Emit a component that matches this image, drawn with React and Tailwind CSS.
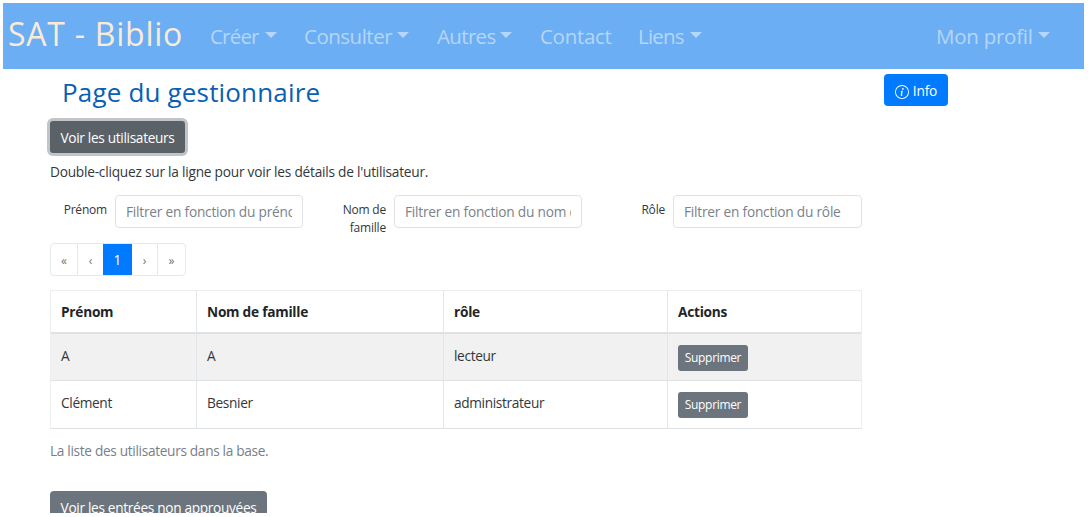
import React from "react";

function Caret() {
  return (
    <span className="mb-[3px] ml-auto inline-block h-0 w-0 border-x-[6px] border-t-[6px] border-x-transparent border-t-current" />
  );
}

function NavItem({ label, caret = true, className = "" }) {
  return (
    <a className={`flex items-center whitespace-nowrap text-[20.5px] leading-[32px] text-[#b5d6f9] ${className}`}>
      {label}
      {caret && <Caret />}
    </a>
  );
}

function Filter({ label, placeholder, className, inputClass }) {
  return (
    <div className={`flex ${className}`}>
      <label className="w-[57px] pt-[6px] text-right text-[12px] leading-[18px] tracking-[-0.2px]">{label}</label>
      <input
        className={`ml-[8px] h-[33px] rounded-[4px] border border-[#dee2e6] bg-white px-[10px] text-[13.7px] tracking-[-0.22px] outline-none placeholder:text-[#7a828a] placeholder:opacity-100 ${inputClass}`}
        placeholder={placeholder}
      />
    </div>
  );
}

function DeleteButton() {
  return (
    <button className="mt-[11px] block h-[26px] w-[70px] whitespace-nowrap rounded-[3px] bg-[#6c757d] text-[12px] leading-[26px] tracking-[-0.33px] text-white">
      Supprimer
    </button>
  );
}

function Row({ cells, className }) {
  return (
    <div className={`grid grid-cols-[146px_247px_224px_1fr] divide-x divide-[#e3e6ea] ${className}`}>
      {cells.map((cell, i) => (
        <div key={i} className="pl-[10px]">
          {cell}
        </div>
      ))}
    </div>
  );
}

export default function App() {
  return (
    <div className="h-[517px] w-[1089px] overflow-hidden bg-white p-[3px] pb-[4px] font-['Open_Sans','Noto_Sans',sans-serif] text-[13.7px] text-[#32373c]">
      <div className="h-[510px] overflow-hidden">
        <nav className="flex h-[66px] w-[1081px] items-center bg-[#6caef3] pl-[5px]">
          <span className="mb-[5px] w-[175px] whitespace-nowrap text-[32px] leading-[48px] tracking-[0.75px] text-[#faebd7]">SAT - Biblio</span>
          <NavItem label="Créer" className="ml-[27px] w-[67px] tracking-[-0.8px]" />
          <NavItem label="Consulter" className="ml-[27px] w-[105px] tracking-[-0.5px]" />
          <NavItem label="Autres" className="ml-[28px] w-[75px] tracking-[-0.65px]" />
          <NavItem label="Contact" caret={false} className="ml-[28px] w-[71px] tracking-[-0.3px]" />
          <NavItem label="Liens" className="ml-[27px] w-[64px] tracking-[-0.8px]" />
          <NavItem label="Mon profil" className="ml-auto mr-[34px] w-[114px] tracking-[-0.25px]" />
        </nav>

        <main className="flex">
          <section className="ml-[47px] w-[812px]">
            <h1 className="ml-[12px] mt-[3px] whitespace-nowrap text-[26px] leading-[40px] tracking-[0.17px] text-[#0a5fb4]">Page du gestionnaire</h1>
            <button className="mt-[9px] block h-[32px] w-[135px] whitespace-nowrap rounded-[3px] bg-[#5a6268] pt-px leading-[32px] tracking-[-0.33px] text-white shadow-[0_0_0_3px_#c1c5c9]">
              Voir les utilisateurs
            </button>
            <p className="mt-[8px] whitespace-nowrap leading-[21px] tracking-[-0.23px]">Double-cliquez sur la ligne pour voir les détails de l'utilisateur.</p>

            <div className="mt-[13px] flex h-[40px]">
              <Filter label="Prénom" placeholder="Filtrer en fonction du prénom" className="w-[253px]" inputClass="w-[188px]" />
              <Filter label={<>Nom de<br />famille</>} placeholder="Filtrer en fonction du nom de famille" className="ml-[26px] w-[253px]" inputClass="w-[188px]" />
              <Filter label="Rôle" placeholder="Filtrer en fonction du rôle" className="ml-[26px] w-[254px]" inputClass="w-[189px]" />
            </div>

            <div className="mt-[8px] flex h-[33px] w-[136px] overflow-hidden rounded-[4px] border border-[#e6e9ec] text-center text-[12px] leading-[34px] text-[#6c757d]">
              <span className="w-[27px] border-r border-[#e6e9ec]">«</span>
              <span className="w-[25px]">‹</span>
              <span className="-my-px w-[29px] bg-[#007bff] text-[13.7px] text-white">1</span>
              <span className="w-[26px] border-r border-[#e6e9ec]">›</span>
              <span className="w-[27px]">»</span>
            </div>

            <div className="mt-[14px] h-[139px] border border-[#eceef0] border-b-[#dee2e6]">
              <Row cells={["Prénom", "Nom de famille", "rôle", "Actions"]} className="h-[43px] border-b-2 border-[#dee2e6] font-bold leading-[42px] tracking-[-0.25px] text-[#212529]" />
              <Row cells={["A", "A", "lecteur", <DeleteButton />]} className="h-[47px] border-b border-[#dee2e6] bg-[#f1f1f1] leading-[44px] tracking-[-0.35px]" />
              <Row cells={["Clément", "Besnier", "administrateur", <DeleteButton />]} className="h-[47px] leading-[44px] tracking-[-0.35px]" />
            </div>
            <p className="mt-[11px] whitespace-nowrap leading-[21px] tracking-[-0.33px] text-[#788088]">La liste des utilisateurs dans la base.</p>
            <button className="mt-[30px] block h-[33px] w-[217px] whitespace-nowrap rounded-[4px] bg-[#6c757d] leading-[33px] tracking-[-0.33px] text-white">
              Voir les entrées non approuvées
            </button>
          </section>

          <button className="ml-[22px] mt-[5px] flex h-[32px] w-[64px] items-center justify-center gap-[4px] rounded-[4px] bg-[#007bff] text-white">
            <svg className="mt-[4px]" width="14" height="14" viewBox="0 0 16 16" fill="currentColor">
              <path d="M8 15A7 7 0 1 1 8 1a7 7 0 0 1 0 14zm0 1A8 8 0 1 0 8 0a8 8 0 0 0 0 16z" />
              <path d="m8.930 6.588-2.290.287-.082.380.450.083c.294.070.352.176.288.469l-.738 3.468c-.194.897.105 1.319.808 1.319.545 0 1.178-.252 1.465-.598l.088-.416c-.2.176-.492.246-.686.246-.275 0-.375-.193-.304-.533L8.930 6.588z" />
              <circle cx="9" cy="4.500" r="1" />
            </svg>
            <span className="mt-[2px] tracking-[-0.2px]">Info</span>
          </button>
        </main>
      </div>
    </div>
  );
}
